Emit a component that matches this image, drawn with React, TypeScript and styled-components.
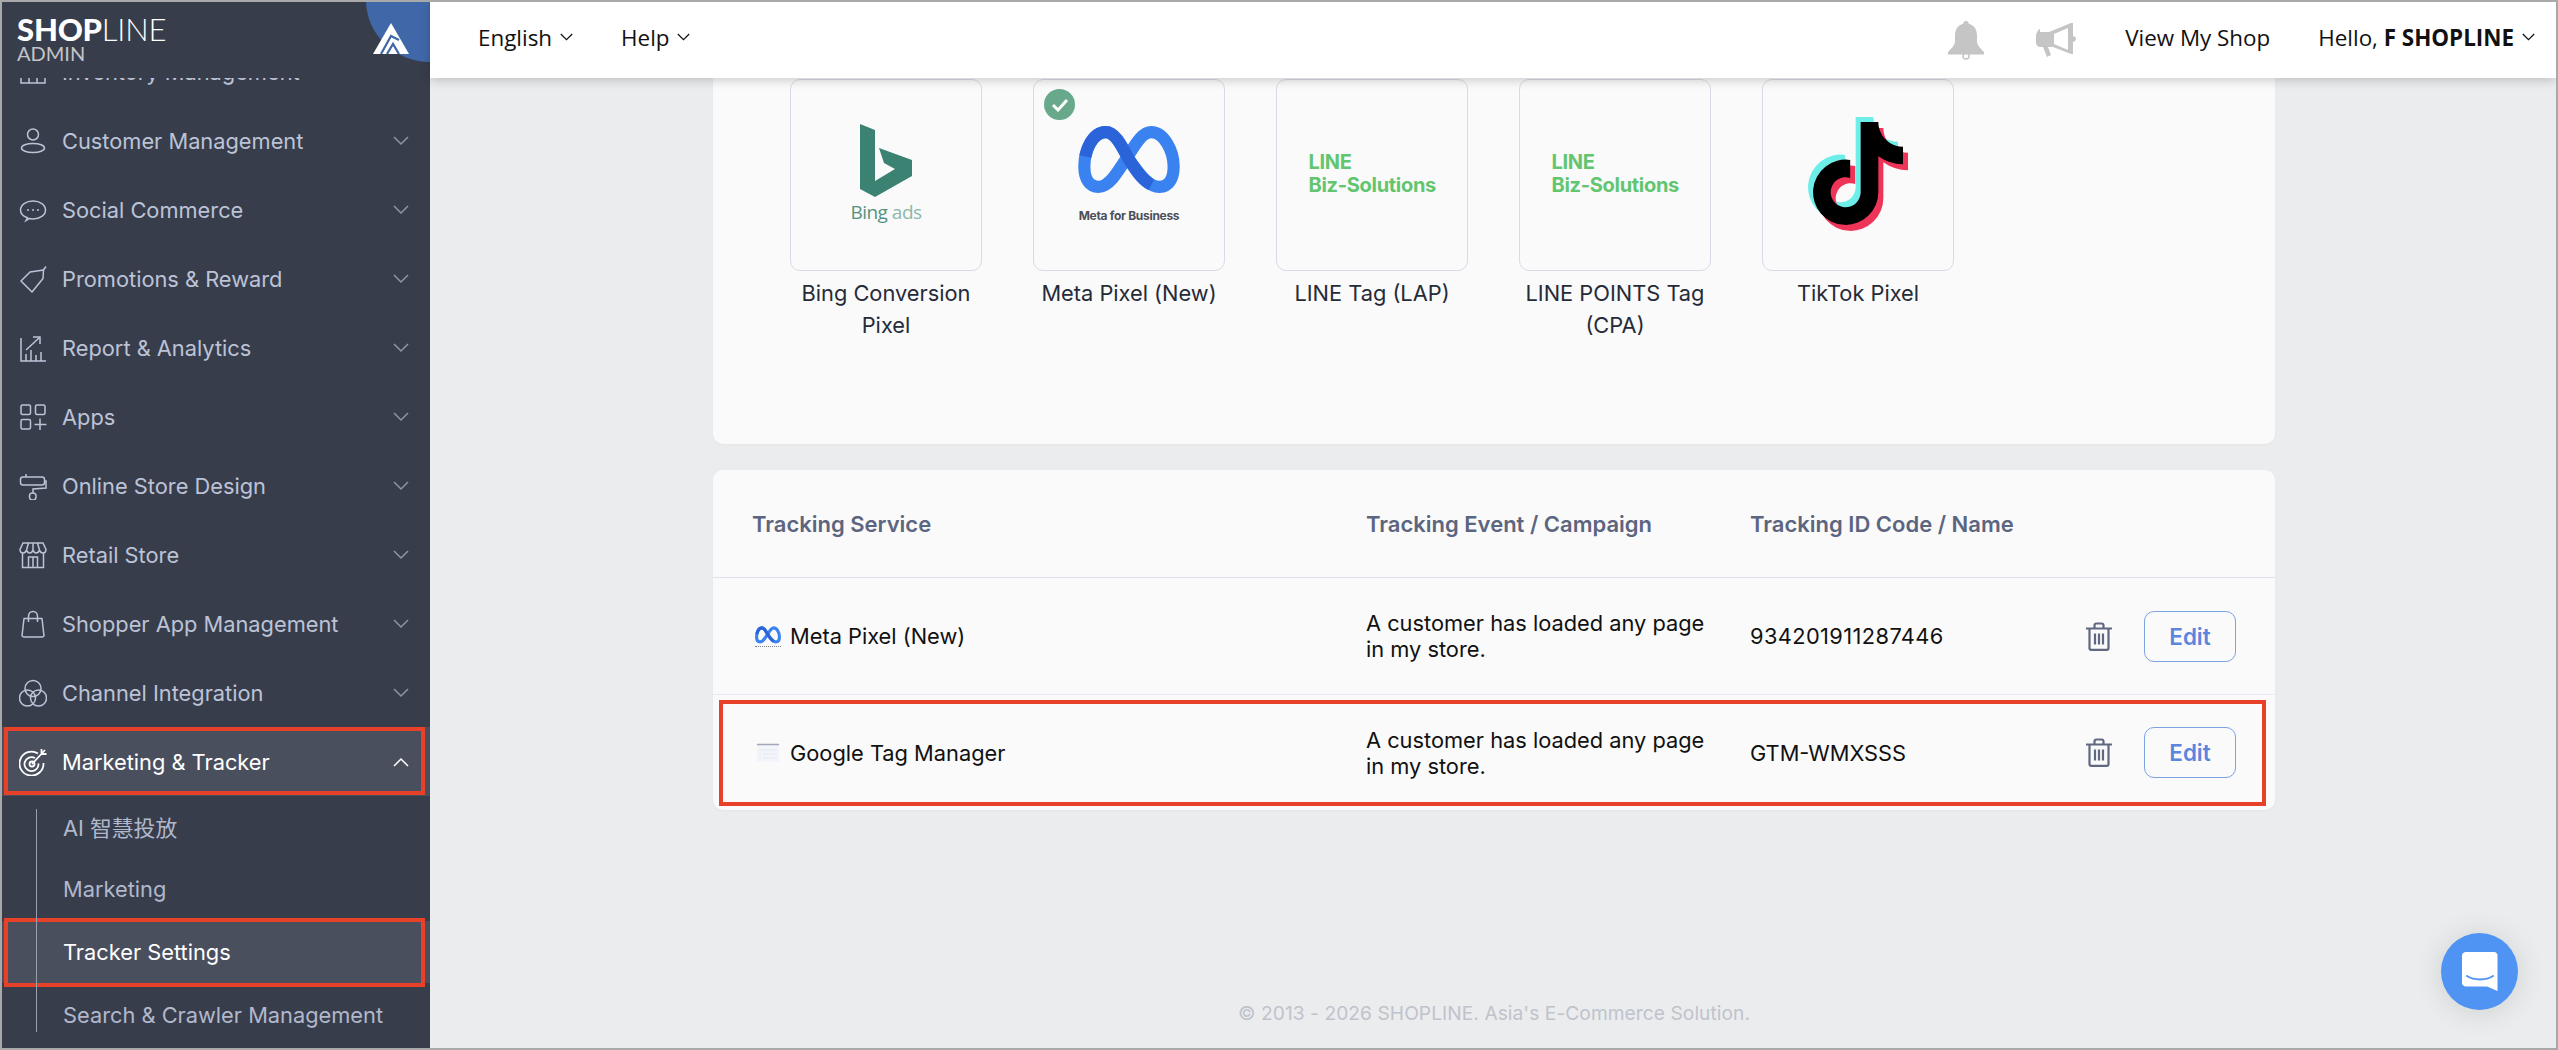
import React from "react";
import styled, { createGlobalStyle } from "styled-components";
import { FaTiktok } from "react-icons/fa";

const GlobalStyle = createGlobalStyle`
  html, body {
    margin: 0;
    padding: 0;
    background: #ebecee;
  }
  * {
    box-sizing: border-box;
  }
`;

const Chevron = ({ up, size = 16 }: { up?: boolean; size?: number }) => (
  <svg width={size} height={size / 2 + 2} viewBox="0 0 16 10" fill="none" stroke="currentColor" strokeWidth="1.5">
    <path d={up ? "M1 9L8 2L15 9" : "M1 1L8 8L15 1"} />
  </svg>
);

const iconProps = {
  width: 28,
  height: 28,
  viewBox: "0 0 28 28",
  fill: "none",
  stroke: "currentColor",
  strokeWidth: 1.5,
};

const InventoryIcon = () => (
  <svg {...iconProps}>
    <path d="M2 3h24v22H2zM2 14h24M10 14v11M18 14v11M10 3v11M18 3v11" />
  </svg>
);
const CustomerIcon = () => (
  <svg {...iconProps}>
    <circle cx="14" cy="7.5" r="5.5" />
    <ellipse cx="14" cy="21" rx="11.5" ry="4.5" />
  </svg>
);
const SocialIcon = () => (
  <svg {...iconProps}>
    <path d="M7 24.5l1.5-2.8C4 20.4 1.5 17.5 1.5 14 1.5 8.8 7 5 14 5s12.500 3.800 12.500 9-5.500 9-12.500 9c-1.300 0-2.500-.1-3.700-.4z" />
    <circle cx="9" cy="14" r="1" fill="currentColor" stroke="none" />
    <circle cx="14" cy="14" r="1" fill="currentColor" stroke="none" />
    <circle cx="19" cy="14" r="1" fill="currentColor" stroke="none" />
  </svg>
);
const PromoIcon = () => (
  <svg {...iconProps}>
    <path d="M2 16L11 7 24.500 5 24 13.500 13 27z" strokeLinejoin="round" />
    <path d="M24 5.500L27 1.500" />
  </svg>
);
const ReportIcon = () => (
  <svg {...iconProps}>
    <path d="M2 4v23h25M7 27v-7M12 27v-11M17 27v-6M22 27v-9M7 16L20 4M14 3h7v7" />
  </svg>
);
const AppsIcon = () => (
  <svg {...iconProps}>
    <rect x="2" y="2" width="9.500" height="9.500" rx="1.500" />
    <rect x="16.500" y="2" width="9.500" height="9.500" rx="1.500" />
    <rect x="2" y="16.500" width="9.500" height="9.500" rx="1.500" />
    <path d="M21 15.500v11.500M15.500 21.500h12" />
  </svg>
);
const RollerIcon = () => (
  <svg {...iconProps}>
    <rect x="1.500" y="5" width="24" height="8" rx="2.500" />
    <path d="M7 2v3M25 9h2v7l-13 1v4" />
    <rect x="10.500" y="21" width="6.500" height="7" rx="3" />
  </svg>
);
const RetailIcon = () => (
  <svg {...iconProps}>
    <path d="M4 2h20l3 6.500c0 2-1.500 3.500-3.200 3.500S21 10.500 20.500 9c-.5 1.500-2 3-3.300 3S14.500 10.500 14 9c-.5 1.500-2 3-3.300 3S8 10.500 7.500 9C7 10.500 6 12 4.200 12S1 10.500 1 8.500zM9.500 2L7.500 9M18.500 2l2 7M14 2v7" />
    <path d="M3.500 12v14.500h21V12M9.500 26.500V16h9v10.500M14 16v10.500" />
  </svg>
);
const BagIcon = () => (
  <svg {...iconProps}>
    <path d="M5 8.500h18l2 17.500-1.500 1h-19L3 26zM9.500 12V6.500C9.500 3.500 11.500 1.500 14 1.500s4.500 2 4.500 5V12" strokeLinejoin="round" />
  </svg>
);
const ChannelIcon = () => (
  <svg {...iconProps}>
    <circle cx="14" cy="9.500" r="8" />
    <circle cx="8.500" cy="19" r="8" />
    <circle cx="19.500" cy="19" r="8" />
  </svg>
);
const TargetIcon = () => (
  <svg {...iconProps} strokeWidth={1.8}>
    <path d="M19 5.500A12 12 0 1 0 24.500 15" />
    <path d="M16 10a7 7 0 1 0 3.500 5.500" />
    <circle cx="13" cy="16" r="2.500" />
    <path d="M13 16L26 2M22.500 1v5h5" />
  </svg>
);

const BellIcon = () => (
  <svg width="36" height="39" viewBox="0 0 36 39" fill="#c5c5c5">
    <path d="M18 0c1.700 0 2.800 1.200 2.800 2.800C26.500 4.300 29 9 29 14.500v5.500c0 4 3.400 7.500 7 11v2.500H0V31c3.600-3.500 7-7 7-11v-5.500C7 9 9.500 4.300 15.200 2.800 15.200 1.200 16.300 0 18 0z" />
    <circle cx="18" cy="35" r="3" fill="none" stroke="#c5c5c5" strokeWidth="1.500" />
  </svg>
);
const MegaphoneIcon = () => (
  <svg width="42" height="34" viewBox="0 0 42 34" fill="#c5c5c5" fillRule="evenodd">
    <path d="M4 9h9L35 0h2v13c2 .5 3 2 3 3s-1 2.500-3 3v12h-2L17 24h-5l3 8-4 2-4-10H4c-2 0-4-2-4-4v-7c0-2 2-7 4-7zM18 11v10l14 6V5z" />
  </svg>
);
const TrashIcon = () => (
  <svg width="26" height="29" viewBox="0 0 26 29" fill="none" stroke="#5f6880" strokeWidth="2.200">
    <path d="M0 6.500h26M8.500 6V3.500c0-1.200.8-2 2-2h5c1.200 0 2 .8 2 2V6M3.500 7v19c0 1 .8 1.800 1.800 1.800h15.400c1 0 1.800-.8 1.800-1.800V7M9 11.500v11M13 11.500v11M17 11.500v11" />
  </svg>
);

const MountainMark = () => (
  <svg width="36" height="31" viewBox="0 0 36 31">
    <path d="M18 0L36 31H0Z" fill="#fff" />
    <path d="M8 31L18 13 26 17M14 31L20 21 26 31" fill="none" stroke="#4068a9" strokeWidth="2.200" />
  </svg>
);

const MetaMark = ({ width, height }: { width: number; height: number }) => (
  <svg width={width} height={height} viewBox="0 0 100 67" fill="none" strokeWidth="12">
    <path
      d="M50 33C42 18 36 6 27 6 14 6 6 24 6 40 6 52 11 60 20 60 30 60 38 47 50 28 58 15 64 6 72 6 84 6 94 24 94 40 94 52 89 60 80 60 70 60 62 50 50 33"
      stroke="#3b82f1"
    />
    <path d="M7 30C10 16 18 6 27 6 36 6 42 18 50 33 58 46 64 54 72 58" stroke="#2b63d9" />
  </svg>
);

const BingMark = () => (
  <svg width="52" height="73" viewBox="0 0 52 73" fill="#3c8272">
    <path d="M0 0L15 6V57L35 45 24 39 19 24 52 36V52L15 73 0 65Z" />
  </svg>
);

const GtmGlyph = () => (
  <svg width="24" height="20" viewBox="0 0 24 20" fill="none">
    <rect x="1" y="1" width="22" height="18" fill="#f4f5fa" />
    <path d="M1 1.500h22" stroke="#a2a7ba" strokeWidth="1.500" />
    <path d="M3 7h18M3 11h2M7 11h14M3 15h2M7 15h14" stroke="#e4e7f2" strokeWidth="1.200" />
  </svg>
);

const TikTokMark = () => (
  <TikTokBox>
    <FaTiktok color="#6eeee8" />
    <FaTiktok color="#ee3459" />
    <FaTiktok color="#000" />
  </TikTokBox>
);

const LineMark = () => (
  <LineLogo>
    <span>LINE</span>
    <span>Biz-Solutions</span>
  </LineLogo>
);

const BingTile = () => (
  <BingLogo>
    <BingMark />
    <BingText>
      Bing <span>ads</span>
    </BingText>
  </BingLogo>
);

const MetaTile = () => (
  <MetaLogo>
    <MetaMark width={102} height={68} />
    <MetaText>Meta for Business</MetaText>
  </MetaLogo>
);

const navItems = [
  { label: "Inventory Management", Icon: InventoryIcon },
  { label: "Customer Management", Icon: CustomerIcon },
  { label: "Social Commerce", Icon: SocialIcon },
  { label: "Promotions & Reward", Icon: PromoIcon },
  { label: "Report & Analytics", Icon: ReportIcon },
  { label: "Apps", Icon: AppsIcon },
  { label: "Online Store Design", Icon: RollerIcon },
  { label: "Retail Store", Icon: RetailIcon },
  { label: "Shopper App Management", Icon: BagIcon },
  { label: "Channel Integration", Icon: ChannelIcon },
];

const subItems = ["AI 智慧投放", "Marketing", "Tracker Settings", "Search & Crawler Management"];

const trackers = [
  { name: "Bing Conversion Pixel", Logo: BingTile },
  { name: "Meta Pixel (New)", Logo: MetaTile, active: true },
  { name: "LINE Tag (LAP)", Logo: LineMark },
  { name: "LINE POINTS Tag (CPA)", Logo: LineMark },
  { name: "TikTok Pixel", Logo: TikTokMark },
];

const App = () => {
  return (
    <>
      <GlobalStyle />
      <Frame>
        <Sidebar>
          <Brand>
            <BrandText>
              <Wordmark>
                SHOP<span>LINE</span>
              </Wordmark>
              <AdminLabel>ADMIN</AdminLabel>
            </BrandText>
            <BrandCorner>
              <MountainMark />
            </BrandCorner>
          </Brand>
          <Nav>
            {navItems.map(({ label, Icon }) => (
              <NavRow key={label}>
                <NavIcon>
                  <Icon />
                </NavIcon>
                <NavLabel>{label}</NavLabel>
                <NavChevron>
                  <Chevron />
                </NavChevron>
              </NavRow>
            ))}
            <NavRow $open>
              <NavIcon>
                <TargetIcon />
              </NavIcon>
              <NavLabel>Marketing &amp; Tracker</NavLabel>
              <NavChevron $open>
                <Chevron up />
              </NavChevron>
            </NavRow>
            <SubList>
              {subItems.map((label) => (
                <SubRow key={label} $active={label === "Tracker Settings"}>
                  {label}
                </SubRow>
              ))}
            </SubList>
          </Nav>
        </Sidebar>
        <Main>
          <TopBar>
            <TopGroup>
              <TopItem>
                <span>English</span>
                <Chevron size={13} />
              </TopItem>
              <TopItem>
                <span>Help</span>
                <Chevron size={13} />
              </TopItem>
            </TopGroup>
            <TopGroup>
              <BellIcon />
              <MegaphoneSlot>
                <MegaphoneIcon />
              </MegaphoneSlot>
              <TopItem>
                <span>View My Shop</span>
              </TopItem>
              <TopItem>
                <span>
                  Hello, <b>F SHOPLINE</b>
                </span>
                <Chevron size={13} />
              </TopItem>
            </TopGroup>
          </TopBar>
          <Content>
            <TileCard>
              {trackers.map(({ name, Logo, active }) => (
                <Tile key={name}>
                  <TileBox>
                    {active && (
                      <ActiveBadge>
                        <svg width="18" height="14" viewBox="0 0 18 14" fill="none" stroke="#fff" strokeWidth="3">
                          <path d="M2 7l5 5 9-10" />
                        </svg>
                      </ActiveBadge>
                    )}
                    <Logo />
                  </TileBox>
                  <TileName>{name}</TileName>
                </Tile>
              ))}
            </TileCard>
            <TableCard>
              <HeadRow>
                <span>Tracking Service</span>
                <span>Tracking Event / Campaign</span>
                <span>Tracking ID Code / Name</span>
              </HeadRow>
              <BodyRow>
                <ServiceCell>
                  <ServiceIcon>
                    <MetaMark width={26} height={18} />
                    <Dotted />
                  </ServiceIcon>
                  Meta Pixel (New)
                </ServiceCell>
                <EventCell>A customer has loaded any page in my store.</EventCell>
                <IdCell $numeric>934201911287446</IdCell>
                <Actions>
                  <TrashIcon />
                  <EditButton>Edit</EditButton>
                </Actions>
              </BodyRow>
              <BodyRow $marked>
                <ServiceCell>
                  <ServiceIcon>
                    <GtmGlyph />
                  </ServiceIcon>
                  Google Tag Manager
                </ServiceCell>
                <EventCell>A customer has loaded any page in my store.</EventCell>
                <IdCell>GTM-WMXSSS</IdCell>
                <Actions>
                  <TrashIcon />
                  <EditButton>Edit</EditButton>
                </Actions>
              </BodyRow>
            </TableCard>
            <Footer>© 2013 - 2026 SHOPLINE. Asia's E-Commerce Solution.</Footer>
          </Content>
        </Main>
        <ChatBubble>
          <svg width="36" height="40" viewBox="0 0 36 40" fill="#fff">
            <path d="M4 0h28c2 0 3.500 1.500 3.500 3.500V39L25 34.500H4c-2 0-4-1.500-4-3.500V3.500C0 1.500 2 0 4 0z" />
            <path d="M5 24c7 4.500 19 4.500 26 0" fill="none" stroke="#4f94f3" strokeWidth="2" strokeLinecap="round" />
          </svg>
        </ChatBubble>
      </Frame>
    </>
  );
};
export default App;

const Frame = styled.div`
  position: relative;
  display: flex;
  width: 2558px;
  height: 1050px;
  overflow: hidden;
  border: 2px solid #a9a9a9;
  background: #ebecee;
  font-family: "Inter", "Noto Sans CJK TC", sans-serif;
`;
const Sidebar = styled.aside`
  flex: none;
  display: flex;
  flex-direction: column;
  width: 430px;
  height: 1050px;
  margin: -2px 0 -2px -2px;
  overflow: hidden;
  background: #383d4c;
  border: solid #282c38;
  border-width: 2px 0 2px 2px;
`;
const Brand = styled.div`
  position: relative;
  z-index: 2;
  flex: none;
  height: 76px;
  padding: 13px 0 0 15px;
  background: #383d4c;
`;
const BrandText = styled.div`
  display: flex;
  flex-direction: column;
`;
const Wordmark = styled.div`
  font-family: "Lato", sans-serif;
  font-size: 31px;
  font-weight: 900;
  line-height: 29px;
  letter-spacing: -0.2px;
  color: #fff;
  span {
    font-weight: 300;
  }
`;
const AdminLabel = styled.div`
  font-family: "Lato", sans-serif;
  font-size: 20px;
  line-height: 18px;
  color: #c3c4c8;
`;
const BrandCorner = styled.div`
  position: absolute;
  top: -2px;
  right: 0;
  width: 64px;
  height: 62px;
  background: #4068a9;
  border-bottom-left-radius: 100%;
  svg {
    position: absolute;
    top: 23px;
    left: 7px;
  }
`;
const Nav = styled.nav`
  margin-top: -41px;
`;
const NavRow = styled.div<{ $open?: boolean }>`
  position: relative;
  display: flex;
  align-items: center;
  height: 69px;
  padding-left: 17px;
  background: ${(p) => (p.$open ? "#4a4f5e" : "transparent")};
  color: ${(p) => (p.$open ? "#fff" : "#bcc3d6")};
  ${(p) =>
    p.$open &&
    `
    &::after {
      content: "";
      position: absolute;
      inset: 0 5px 1px 2px;
      border: 4px solid #e8412a;
    }
  `}
`;
const NavIcon = styled.div`
  flex: none;
  display: flex;
  width: 28px;
  height: 28px;
  margin-right: 15px;
`;
const NavLabel = styled.div`
  flex: 1;
  font-size: 21.800px;
  line-height: 30px;
`;
const NavChevron = styled.div<{ $open?: boolean }>`
  display: flex;
  margin-right: 21px;
  color: ${(p) => (p.$open ? "#fff" : "#8f95a6")};
`;
const SubList = styled.div`
  position: relative;
  margin-top: -1px;
  &::before {
    content: "";
    position: absolute;
    top: 14px;
    left: 34px;
    width: 1px;
    height: 223px;
    background: #9a9fae;
    z-index: 1;
  }
`;
const SubRow = styled.div<{ $active?: boolean }>`
  position: relative;
  display: flex;
  align-items: center;
  height: 62.800px;
  padding-left: 61px;
  font-size: 21.800px;
  background: ${(p) => (p.$active ? "#4a4f5e" : "transparent")};
  color: ${(p) => (p.$active ? "#fff" : "#b1b8cb")};
  ${(p) =>
    p.$active &&
    `
    &::after {
      content: "";
      position: absolute;
      inset: -3px 5px -4px 2px;
      border: 4px solid #e8412a;
    }
  `}
`;
const Main = styled.main`
  flex: 1;
  display: flex;
  flex-direction: column;
  min-width: 0;
`;
const TopBar = styled.header`
  position: relative;
  z-index: 2;
  flex: none;
  display: flex;
  align-items: center;
  justify-content: space-between;
  height: 76px;
  padding: 0 21px 0 48px;
  background: #fff;
  box-shadow: 0 2px 10px rgba(0, 0, 0, 0.2);
  font-family: "Open Sans", sans-serif;
  font-size: 22.400px;
  color: #111;
`;
const TopGroup = styled.div`
  display: flex;
  align-items: center;
`;
const MegaphoneSlot = styled.div`
  display: flex;
  margin: 0 47px 0 52px;
`;
const TopItem = styled.div`
  display: flex;
  align-items: center;
  gap: 8px;
  margin-top: -5px;
  & + & {
    margin-left: 48px;
  }
  b {
    font-weight: 700;
  }
`;
const Content = styled.div`
  flex: 1;
  display: flex;
  flex-direction: column;
  align-items: center;
  padding-left: 2px;
  overflow: hidden;
`;
const TileCard = styled.section`
  flex: none;
  display: flex;
  gap: 51px;
  width: 1562px;
  height: 366px;
  padding: 1px 77px 0;
  background: #fafafb;
  border-radius: 0 0 10px 10px;
  box-shadow: 0 1px 3px rgba(0, 0, 0, 0.03);
`;
const Tile = styled.div`
  width: 192px;
  text-align: center;
`;
const TileBox = styled.div`
  position: relative;
  display: flex;
  align-items: center;
  justify-content: center;
  height: 192px;
  border: 1px solid #d6dbe6;
  border-radius: 10px;
`;
const ActiveBadge = styled.div`
  position: absolute;
  top: 9px;
  left: 10px;
  display: flex;
  align-items: center;
  justify-content: center;
  width: 31px;
  height: 31px;
  border-radius: 50%;
  background: #68a98b;
`;
const TileName = styled.div`
  margin-top: 6px;
  font-size: 21.800px;
  line-height: 32px;
  color: #262b38;
`;
const BingLogo = styled.div`
  display: flex;
  flex-direction: column;
  align-items: center;
  margin-top: -2px;
`;
const BingText = styled.div`
  margin-top: 2px;
  font-family: "Open Sans", sans-serif;
  font-size: 19px;
  line-height: 26px;
  letter-spacing: -0.5px;
  color: #52937f;
  span {
    color: #8bb8aa;
  }
`;
const MetaLogo = styled.div`
  display: flex;
  flex-direction: column;
  align-items: center;
  margin-top: -1px;
`;
const MetaText = styled.div`
  margin-top: 15px;
  font-size: 12px;
  line-height: 14px;
  font-weight: 700;
  letter-spacing: -0.3px;
  color: #4c5058;
  white-space: nowrap;
`;
const LineLogo = styled.div`
  display: flex;
  flex-direction: column;
  gap: 1px;
  width: 127px;
  margin-top: -3px;
  font-size: 20px;
  font-weight: 700;
  line-height: 22px;
  color: #62c56f;
  letter-spacing: -0.3px;
  white-space: nowrap;
  text-align: left;
`;
const TikTokBox = styled.div`
  position: relative;
  width: 100px;
  height: 114px;
  margin-top: -3px;
  svg {
    position: absolute;
    width: 90px;
    height: 103px;
  }
  svg:nth-child(1) {
    top: 0;
    left: 0;
  }
  svg:nth-child(2) {
    top: 11px;
    left: 10px;
  }
  svg:nth-child(3) {
    top: 5px;
    left: 5px;
  }
`;
const TableCard = styled.section`
  flex: none;
  width: 1562px;
  margin-top: 26px;
  background: #fafafb;
  border-radius: 10px;
  box-shadow: 0 1px 3px rgba(0, 0, 0, 0.03);
`;
const HeadRow = styled.div`
  display: grid;
  grid-template-columns: 614px 384px 1fr;
  align-items: center;
  height: 108px;
  padding: 0 39px;
  border-bottom: 1px solid #dfe3ec;
  font-size: 22px;
  font-weight: 600;
  color: #5c6580;
`;
const BodyRow = styled.div<{ $marked?: boolean }>`
  position: relative;
  display: grid;
  grid-template-columns: 614px 384px 1fr auto;
  align-items: center;
  height: 116px;
  padding: 0 39px;
  font-size: 21.800px;
  color: #111;
  & + & {
    border-top: 1px solid #e9eaf3;
  }
  ${(p) =>
    p.$marked &&
    `
    &::after {
      content: "";
      position: absolute;
      inset: 5px 9px 4px 6px;
      border: 4px solid #e8412a;
      pointer-events: none;
    }
  `}
`;
const ServiceCell = styled.div`
  display: flex;
  align-items: center;
  gap: 9px;
  padding-left: 3px;
`;
const ServiceIcon = styled.div`
  display: flex;
  flex-direction: column;
  align-items: center;
  justify-content: center;
  gap: 2px;
  width: 26px;
`;
const Dotted = styled.div`
  width: 26px;
  border-top: 1px dotted #7d8190;
`;
const EventCell = styled.div`
  max-width: 350px;
  line-height: 26px;
`;
const IdCell = styled.span<{ $numeric?: boolean }>`
  letter-spacing: ${(p) => (p.$numeric ? "0.4px" : "0")};
`;
const Actions = styled.div`
  display: flex;
  align-items: center;
  gap: 32px;
`;
const EditButton = styled.button`
  width: 92px;
  height: 51px;
  padding: 0;
  border: 1px solid #7da2e3;
  border-radius: 10px;
  background: transparent;
  font-family: "Inter", sans-serif;
  font-size: 22.400px;
  font-weight: 600;
  color: #5b86dd;
`;
const Footer = styled.footer`
  margin-top: 190px;
  font-size: 19.200px;
  line-height: 26px;
  letter-spacing: 0.05px;
  color: #bfc3cc;
`;
const ChatBubble = styled.div`
  position: absolute;
  right: 38px;
  bottom: 38px;
  display: flex;
  align-items: center;
  justify-content: center;
  width: 77px;
  height: 77px;
  border-radius: 50%;
  background: #4f94f3;
  box-shadow: 0 2px 30px rgba(0, 0, 0, 0.12);
`;
